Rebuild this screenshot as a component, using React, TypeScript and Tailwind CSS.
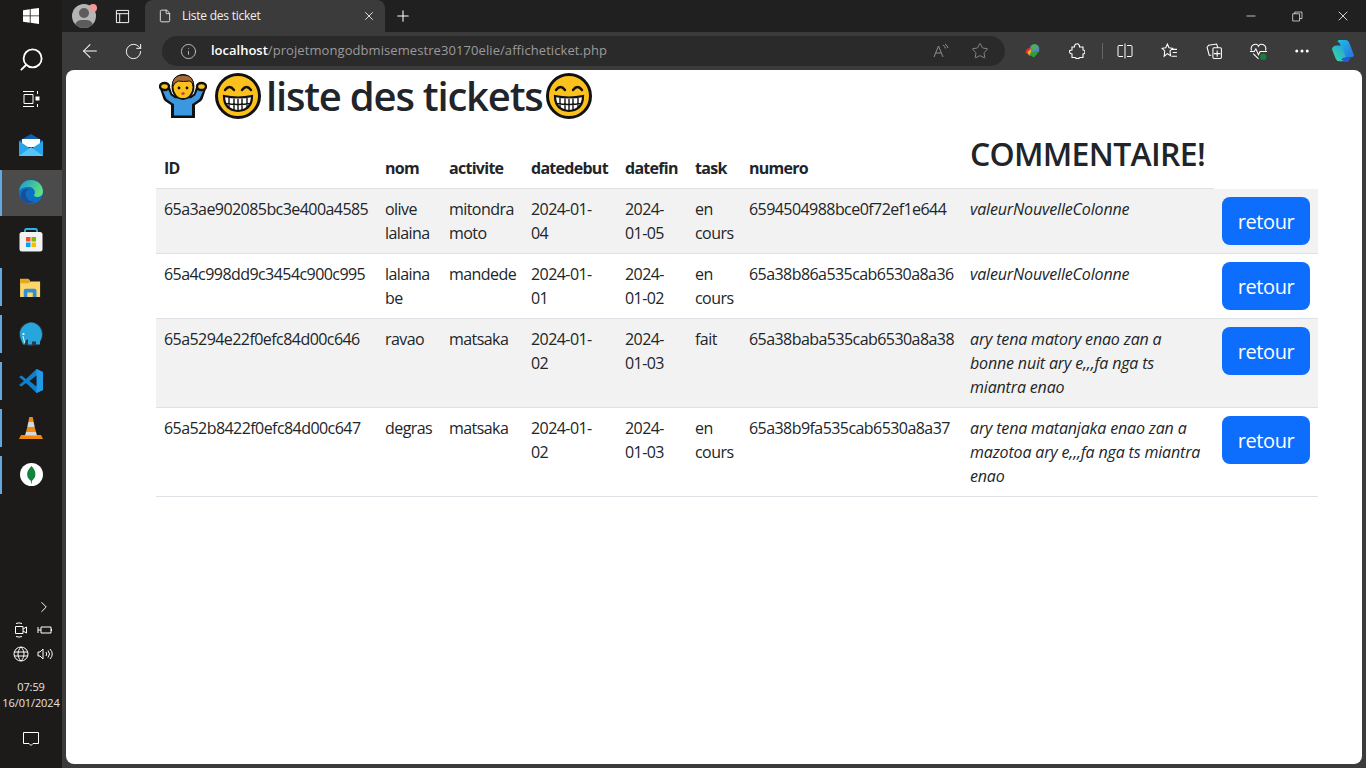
import React from 'react';
import { ArrowLeft, ChevronRight, Ellipsis, File, Info, Minus, Plus, RotateCw, Search, Star, X } from 'lucide-react';

type Ticket = {
  id: string;
  nom: string;
  activite: string;
  debut: string;
  fin: string;
  task: string;
  numero: string;
  commentaire: string;
};

const tickets: Ticket[] = [
  { id: '65a3ae902085bc3e400a4585', nom: 'olive lalaina', activite: 'mitondra moto', debut: '2024-01-04', fin: '2024-01-05', task: 'en cours', numero: '6594504988bce0f72ef1e644', commentaire: 'valeurNouvelleColonne' },
  { id: '65a4c998dd9c3454c900c995', nom: 'lalaina be', activite: 'mandede', debut: '2024-01-01', fin: '2024-01-02', task: 'en cours', numero: '65a38b86a535cab6530a8a36', commentaire: 'valeurNouvelleColonne' },
  { id: '65a5294e22f0efc84d00c646', nom: 'ravao', activite: 'matsaka', debut: '2024-01-02', fin: '2024-01-03', task: 'fait', numero: '65a38baba535cab6530a8a38', commentaire: 'ary tena matory enao zan a bonne nuit ary e,,,fa nga ts miantra enao' },
  { id: '65a52b8422f0efc84d00c647', nom: 'degras', activite: 'matsaka', debut: '2024-01-02', fin: '2024-01-03', task: 'en cours', numero: '65a38b9fa535cab6530a8a37', commentaire: 'ary tena matanjaka enao zan a mazotoa ary e,,,fa nga ts miantra enao' },
];

const GrinEmoji = () => (
  <svg viewBox="0 0 48 48" className="w-12 h-12 shrink-0">
    <circle cx="24" cy="24" r="21.5" fill="#fcc21b" stroke="#111" strokeWidth="3" />
    <path d="M11 18q4.500-6 9 0M28 18q4.500-6 9 0" fill="none" stroke="#111" strokeWidth="2.4" strokeLinecap="round" />
    <path d="M10 24q14 3 28 0 0 14-14 15Q10 38 10 24z" fill="#fff" stroke="#111" strokeWidth="2.2" />
    <path d="M15 26v10M20 26.500v11.500M24 27v12M28 26.500v11.500M33 26v10M11 31.500q13 2 26 0" fill="none" stroke="#111" strokeWidth="1.400" />
  </svg>
);

const ShrugEmoji = () => (
  <svg viewBox="0 0 48 48" className="w-12 h-12 shrink-0">
    <path d="M6 16 9 25 15 29H33L39 25 42 16" fill="none" stroke="#111" strokeWidth="10" strokeLinejoin="round" />
    <rect x="12" y="26" width="24" height="20" fill="#111" />
    <path d="M6 17 9.500 25 15 29H33L38.500 25 42 17" fill="none" stroke="#3b97e0" strokeWidth="5.500" strokeLinejoin="round" />
    <rect x="15" y="27" width="18" height="16.500" fill="#3b97e0" />
    <ellipse cx="5.500" cy="14.500" rx="4.500" ry="3.500" fill="#fcc21b" stroke="#111" strokeWidth="2.400" />
    <ellipse cx="42.500" cy="14.500" rx="4.500" ry="3.500" fill="#fcc21b" stroke="#111" strokeWidth="2.400" />
    <ellipse cx="24" cy="15" rx="10.500" ry="12" fill="#fcc21b" stroke="#111" strokeWidth="1.800" />
    <path d="M13.500 15Q12.500 3 24 3t10.500 12q-1-6-4-6-6 1-11 0-4 1-6 6z" fill="#a56a37" stroke="#111" strokeWidth="1" />
    <circle cx="20" cy="16" r="1.400" fill="#111" />
    <circle cx="28" cy="16" r="1.400" fill="#111" />
    <ellipse cx="24" cy="21.500" rx="1.700" ry="1.500" fill="#c9472e" />
  </svg>
);

const WindowsLogo = () => (
  <svg viewBox="0 0 16 16" className="w-4 h-4" fill="#fff">
    <path d="M0 2.300 6.800 1.200V7.500H0zM7.600 1.100 16 0V7.500H7.600zM0 8.300H6.800V14.700L0 13.700zM7.600 8.300H16V16L7.600 14.800z" />
  </svg>
);

const TaskView = () => (
  <svg viewBox="0 0 18 18" className="w-[18px] h-[18px]" fill="none" stroke="#fff" strokeWidth="1">
    <path d="M1 1.500h11M1 16.500h11M2 4.500h9v9H2zM15.500 1v3M15.500 14v3" />
    <rect x="14" y="7" width="3" height="3" fill="#fff" />
  </svg>
);

const MailLogo = () => (
  <svg viewBox="0 0 24 24" className="w-6 h-6">
    <path d="M0 7 12 0l12 7v3H0z" fill="#0f5fb0" />
    <path d="M3 5h18v8H3z" fill="#fff" />
    <path d="M0 7l12 8 12-8v15H0z" fill="#27a5ea" />
    <path d="M0 22 12 13l12 9z" fill="#58c5f5" />
  </svg>
);

const EdgeLogo = ({ size = 'w-6 h-6' }: { size?: string }) => (
  <svg viewBox="0 0 24 24" className={size}>
    <defs>
      <linearGradient id="edgeTop" x1="0" y1="0" x2="1" y2="0.500">
        <stop offset="0" stopColor="#1597d8" />
        <stop offset="1" stopColor="#5fe07c" />
      </linearGradient>
    </defs>
    <circle cx="12" cy="12" r="12" fill="#0c6fc4" />
    <path d="M0 11C1 3 7 0 12 0c7 0 12 5 12 12 0 3-3 5-6 5-2 0-3-1-3-2 2-2 1-7-4-8-5-.5-9 1-11 4z" fill="url(#edgeTop)" />
    <path d="M11 9c-3 0-5 3-4 7 1 3 4 6 9 6-4 2-11 2-14-4-1-7 4-10 9-9z" fill="#1a4f96" />
  </svg>
);

const StoreLogo = () => (
  <svg viewBox="0 0 24 24" className="w-6 h-6">
    <path d="M6 5V2.500Q6 1 7.500 1h9Q18 1 18 2.500V5" fill="none" stroke="#28b5ec" strokeWidth="1.800" />
    <rect x="0.500" y="4" width="23" height="19.500" rx="2.500" fill="#f2f2f2" />
    <rect x="7" y="9" width="4.500" height="4.500" fill="#f25022" />
    <rect x="12.500" y="9" width="4.500" height="4.500" fill="#7fba00" />
    <rect x="7" y="14.500" width="4.500" height="4.500" fill="#00a4ef" />
    <rect x="12.500" y="14.500" width="4.500" height="4.500" fill="#ffb900" />
  </svg>
);

const FolderLogo = () => (
  <svg viewBox="0 0 24 22" className="w-[22px] h-5">
    <path d="M0 2h9l2 2h-11z" fill="#d9a21b" />
    <path d="M0 3h10l1 2h11v17H0z" fill="#fcd669" />
    <path d="M0 3h10l1 2-1 2H0z" fill="#e5a91f" />
    <path d="M4 22v-7q0-2 2-2h10q2 0 2 2v7h-4v-5H8v5z" fill="#2f8fd8" />
  </svg>
);

const ElephantLogo = () => (
  <svg viewBox="0 0 24 24" className="w-6 h-6">
    <circle cx="12" cy="12" r="12" fill="#2b3a44" />
    <path d="M1 12C1 6 6 1 12 .500c6 .500 11 5 11 12 0 3-1 5-2 7v3h-4v-3h-4v3H9v-5c-2 0-3 1-3 5H4c-1-3-3-6-3-10.500z" fill="#27a6dc" />
    <circle cx="4.500" cy="12" r="1.100" fill="#fff" />
    <path d="M4 14q1 4 1.500 7" stroke="#e8f4fa" strokeWidth="1" fill="none" />
  </svg>
);

const VsCodeLogo = () => (
  <svg viewBox="0 0 24 24" className="w-6 h-6">
    <path d="M17.500 0 24 3v18l-6.500 3L7 14l-4.500 3.500L0 16l5-4-5-4 2.500-1.500L7 10z" fill="#0f7fce" />
    <path d="M17.500 0 24 3v18l-6.500 3z" fill="#1e9ae8" />
    <path d="M17.500 6.500 10.500 12l7 5.500z" fill="#1c1b1a" />
  </svg>
);

const VlcLogo = () => (
  <svg viewBox="0 0 24 24" className="w-6 h-6">
    <path d="M2 19h20l2 4H0z" fill="#f08a0c" />
    <path d="M10.300 1h3.400l1 5H9.300z" fill="#f28b0d" />
    <path d="M9.300 6h5.400l1 5H8.300z" fill="#d8d8d8" />
    <path d="M8.300 11h7.400l1.300 5H7z" fill="#f28b0d" />
    <path d="M7 16h10l1 3.500H6z" fill="#d8d8d8" />
  </svg>
);

const MongoLogo = () => (
  <svg viewBox="0 0 24 24" className="w-[23px] h-[23px]">
    <circle cx="12" cy="12" r="12" fill="#fff" />
    <path d="M12 3c3 3 4.500 6 4 10-.5 3-2.500 4.500-3.500 5.500l-.3 3h-.6l-.3-3C10 17.500 8 16 7.500 13c-.5-4 1.500-7 4.500-10z" fill="#13823f" />
  </svg>
);

const CopilotLogo = () => (
  <svg viewBox="0 0 26 26" className="w-6 h-6">
    <defs>
      <linearGradient id="copA" x1="0" y1="0" x2="1" y2="1">
        <stop offset="0" stopColor="#19c3e6" />
        <stop offset="1" stopColor="#2b6fe0" />
      </linearGradient>
      <linearGradient id="copB" x1="0" y1="1" x2="1" y2="0">
        <stop offset="0" stopColor="#3fd8a0" />
        <stop offset="1" stopColor="#1c9de0" />
      </linearGradient>
    </defs>
    <path d="M8 1h8q3 0 4 4l5 13q-1 2-4 2h-6L10 6Q9 3 7 3z" fill="url(#copA)" />
    <path d="M6 7h6l4 13q1 3 3 4H9q-3 0-4-3L1 11Q2 7 6 7z" fill="url(#copB)" />
    <path d="M11 22q3 3 6 3h1q2-1 3-5h-7z" fill="#2557d6" />
  </svg>
);

const IdmLogo = () => (
  <svg viewBox="0 0 16 14" className="w-4 h-[14px]">
    <circle cx="9.500" cy="5" r="4.800" fill="#5f86c4" />
    <path d="M7 1q4-2 6 1l-2 3H7z" fill="#4caf50" />
    <path d="M.5 9a5 5 0 0 1 4-5l2 1-3 3 1 3z" fill="#d8342c" />
    <path d="M2.500 8 6 5v3l2 1-2 2-2 .5z" fill="#f3b21c" />
    <path d="M6 8 15 6.500 9 13.500 4.500 11z" fill="#2e9e3a" />
  </svg>
);

const Stroke = ({ d, className = 'w-4 h-4', color = '#fff' }: { d: string; className?: string; color?: string }) => (
  <svg viewBox="0 0 16 16" className={className} fill="none" stroke={color} strokeWidth="1">
    <path d={d} />
  </svg>
);

const Taskbar = () => {
  const apps = [
    { icon: <MailLogo />, bar: false, active: false },
    { icon: <EdgeLogo />, bar: true, active: true },
    { icon: <StoreLogo />, bar: false, active: false },
    { icon: <FolderLogo />, bar: true, active: false },
    { icon: <ElephantLogo />, bar: true, active: false },
    { icon: <VsCodeLogo />, bar: true, active: false },
    { icon: <VlcLogo />, bar: true, active: false },
    { icon: <MongoLogo />, bar: true, active: false },
  ];

  return (
    <aside className="w-[62px] shrink-0 h-full bg-[#1c1b1a] flex flex-col items-stretch text-white">
      <div className="h-8 flex items-center justify-center"><WindowsLogo /></div>
      <div className="h-[54px] flex items-center justify-center">
        <Search className="w-[27px] h-[27px] -scale-x-100" strokeWidth={1.6} />
      </div>
      <div className="h-[26px] flex items-center justify-center"><TaskView /></div>
      <div className="mt-[11px] flex flex-col">
        {apps.map((app, i) => (
          <div key={i} className={`flex items-center justify-center relative pb-[2px] ${app.active ? 'bg-[#4b4b4b] h-[46px] mb-px' : 'h-[47px]'}`}>
            {app.bar && <span className={`absolute left-0 w-[2px] bg-[#63a9e0] ${app.active ? 'top-0 bottom-0' : 'top-[4px] bottom-[5px]'}`} />}
            {app.icon}
          </div>
        ))}
      </div>

      <div className="mt-auto flex flex-col pb-[21px]">
        <div className="flex justify-end pr-[9px]"><ChevronRight className="w-[18px] h-[18px]" strokeWidth={1.3} /></div>
        <div className="flex justify-center gap-2 mt-[6px] pl-[4px]">
          <Stroke d="M2.500 4.500h7.500v7H2.500zM10 7l3.500-2v6L10 9M3 1.500q3-1.200 6 0M3 14.500q3 1.200 6 0" />
          <Stroke d="M1 5v6M1 8h3M4 5h10v6H4zM14.500 7v2" />
        </div>
        <div className="flex justify-center gap-2 mt-2 pl-[4px]">
          <Stroke className="w-4 h-4" d="M8 1a7 7 0 1 0 0 14A7 7 0 0 0 8 1zM1 6h14M1 10h14M8 1c-4 4-4 10 0 14M8 1c4 4 4 10 0 14" />
          <Stroke className="w-4 h-4" d="M1 6v4h2l3 3V3L3 6zM9 6q1.500 2 0 4M11 4.500q3 3.500 0 7M13 3q4.500 5 0 10" />
        </div>
        <div className="mt-[17px] text-center text-[11px] leading-4 text-[#e4e4e4] font-['Open_Sans',sans-serif] tracking-[-0.01em] whitespace-nowrap">
          <div>07:59</div>
          <div>16/01/2024</div>
        </div>
        <div className="flex justify-center mt-[20px]">
          <Stroke className="w-4 h-4" d="M.5 1.500h15v11H10l-2 2-2-2H.5z" />
        </div>
      </div>
    </aside>
  );
};

const TabStrip = () => (
  <div className="h-8 flex items-stretch bg-[#202020] text-white shrink-0">
    <div className="w-[83px] flex items-center pl-[10px]">
      <div className="relative w-[24px] h-[24px]">
        <div className="w-full h-full rounded-full bg-[#b5b5b5] overflow-hidden relative">
          <span className="absolute left-[7px] top-[4px] w-[10px] h-[10px] rounded-full bg-[#5c5c5c]" />
          <span className="absolute left-[3px] top-[16px] w-[18px] h-3 rounded-full bg-[#5c5c5c]" />
        </div>
        <span className="absolute -right-[1px] top-0 w-2 h-2 rounded-full bg-[#f19a9a]" />
      </div>
      <Stroke className="w-[15px] h-[15px] ml-[19px]" d="M1.500 1.500h13v13h-13zM1.500 5h13M5 5v9.500" />
    </div>
    <div className="w-[240px] bg-[#3b3b3b] rounded-t-lg flex items-center pl-[13px] pr-[9px]">
      <File className="w-[14px] h-[14px]" strokeWidth={1.4} />
      <span className="ml-[10px] text-xs text-[#f0f0f0] flex-1 font-['Open_Sans',sans-serif] tracking-[-0.02em]">Liste des ticket</span>
      <X className="w-[14px] h-[14px]" strokeWidth={1.4} />
    </div>
    <div className="flex items-center ml-[9px]"><Plus className="w-[18px] h-[18px]" strokeWidth={1.4} /></div>
    <div className="ml-auto flex items-center pr-[15px]">
      <Minus className="w-[14px] h-[14px]" strokeWidth={1.2} />
      <Stroke className="w-[11px] h-[11px] ml-[34px]" d="M1 4h10v10.500H1zM4 4V1.500h10.500V11H11" />
      <X className="w-[16px] h-[16px] ml-[32px]" strokeWidth={1.2} />
    </div>
  </div>
);

const ToolbarSlot = ({ width, children }: { width: string; children: React.ReactNode }) => (
  <div className={`${width} flex justify-center items-center`}>{children}</div>
);

const Toolbar = () => (
  <div className="h-[38px] flex items-center bg-[#3b3b3b] text-white shrink-0 pl-[17px]">
    <ArrowLeft className="w-[22px] h-[22px]" strokeWidth={1.1} />
    <RotateCw className="w-[19px] h-[19px] ml-[23px]" strokeWidth={1.2} />
    <div className="ml-[19px] w-[843px] h-[30px] rounded-full bg-[#2a2a2a] flex items-center pl-[18px] pr-[16px] font-['Open_Sans',sans-serif] text-[13px]">
      <Info className="w-[17px] h-[17px] text-[#cfcfcf]" strokeWidth={1.2} />
      <span className="ml-[14px] font-semibold">localhost</span>
      <span className="text-[#9a9a9a] tracking-[0.006em]">/projetmongodbmisemestre30170elie/afficheticket.php</span>
      <div className="ml-auto flex items-center gap-[22px] text-[#8e8e8e]">
        <Stroke className="w-4 h-4" color="#8e8e8e" d="M1 14 5.500 3l4.500 11M2.800 10h5.400M10 2q2 1 2.500 3.500M12 1q2.500 1.500 3 4" />
        <Star className="w-[18px] h-[18px]" strokeWidth={1.2} />
      </div>
    </div>
    <div className="ml-[6px] flex items-center">
      <ToolbarSlot width="w-[44px]"><IdmLogo /></ToolbarSlot>
      <ToolbarSlot width="w-[44px]">
        <svg viewBox="0 0 16 16" className="w-4 h-4" fill="none" stroke="#fff" strokeWidth="1.100">
          <path d="M5.500 2.800q.5-2 2.500-2t2.500 2V4h3.500v3q2 0 2 2t-2 2v3.500h-3q-1 1-2.500 1T6 14.500H3V11q-2 0-2.500-2T3 7V4h2.500z" />
        </svg>
      </ToolbarSlot>
      <span className="w-px h-4 bg-[#666] ml-[3px]" />
      <ToolbarSlot width="w-[44px]">
        <Stroke className="w-4 h-4" d="M8 .5v15M6 2.500H2Q1 2.500 1 3.500v9q0 1 1 1h4M10 2.500h4q1 0 1 1v9q0 1-1 1h-4" />
      </ToolbarSlot>
      <ToolbarSlot width="w-[45px]">
        <Stroke className="w-[17px] h-[17px]" d="M6 1l1.500 3.500 3.500.5-2.500 2.500.5 4.500-3-2-3 2.500.5-5L1 5l3.500-.5zM11 6h4M11 9h4M10 12.500h5" />
      </ToolbarSlot>
      <ToolbarSlot width="w-[45px]">
        <Stroke className="w-[17px] h-[17px]" d="M11 4 10 1 2.500 2 1 4l2 7.500H5M6.500 5.500q0-1 1-1h6q1 0 1 1v8q0 1-1 1h-6q-1 0-1-1zM10.500 7v6M7.500 10h6" />
      </ToolbarSlot>
      <ToolbarSlot width="w-[43px]">
        <svg viewBox="0 0 16 16" className="w-[17px] h-[17px]" fill="none" stroke="#fff" strokeWidth="1">
          <path d="M1.500 7C-.5 2 6 -1 8 3c2-4 8.500-1 6.500 4M0 8h4l1.500-2.500L8 11l1.500-3H16M3 10l5 5" />
          <circle cx="12.500" cy="13" r="3" fill="#16803a" stroke="none" />
        </svg>
      </ToolbarSlot>
      <ToolbarSlot width="w-[43px]"><Ellipsis className="w-[18px] h-[18px]" strokeWidth={2} /></ToolbarSlot>
      <ToolbarSlot width="w-[40px]"><CopilotLogo /></ToolbarSlot>
    </div>
  </div>
);

const App: React.FC = () => {
  return (
    <div className="w-[1366px] h-[768px] flex bg-[#3b3b3b] overflow-hidden">
      <Taskbar />
      <div className="flex-1 flex flex-col min-w-0">
        <TabStrip />
        <Toolbar />
        <main className="flex-1 ml-1 mr-1 mb-1 bg-white rounded-lg pl-[90px] pr-[44px] text-[#212529] font-['Open_Sans',sans-serif]">
          <h1 className="flex items-center h-[48px] mt-[2px] mb-[6px] pl-[3px] text-[40px] leading-[48px] font-semibold tracking-[-0.03em]">
            <ShrugEmoji />
            <span className="ml-[7px]"><GrinEmoji /></span>
            <span className="pl-[4px] pr-[2px]">liste des tickets</span>
            <GrinEmoji />
          </h1>
          <table className="w-[1162px] table-fixed border-collapse text-base leading-6 tracking-[-0.035em]">
            <colgroup>
              <col className="w-[221px]" />
              <col className="w-[64px]" />
              <col className="w-[82px]" />
              <col className="w-[94px]" />
              <col className="w-[70px]" />
              <col className="w-[54px]" />
              <col className="w-[221px]" />
              <col className="w-[252px]" />
              <col className="w-[104px]" />
            </colgroup>
            <thead>
              <tr className="h-[60px] tracking-[-0.045em]">
                {['ID', 'nom', 'activite', 'datedebut', 'datefin', 'task', 'numero'].map((h) => (
                  <th key={h} className="p-2 text-left align-bottom font-bold border-b border-[#dee2e6]">{h}</th>
                ))}
                <th className="p-2 text-left align-bottom border-b border-[#dee2e6]">
                  <h2 className="text-[32px] leading-[40px] font-semibold mb-[6px] tracking-[-0.022em] whitespace-nowrap">COMMENTAIRE!</h2>
                </th>
              </tr>
            </thead>
            <tbody>
              {tickets.map((t, i) => (
                <tr key={t.id} className={`border-b border-[#dee2e6] ${i % 2 === 0 ? 'bg-[#f2f2f2]' : ''}`}>
                  <td className="p-2 align-top">{t.id}</td>
                  <td className="p-2 align-top">{t.nom}</td>
                  <td className="p-2 align-top">{t.activite}</td>
                  <td className="p-2 align-top"><div className="w-[70px]">{t.debut}</div></td>
                  <td className="p-2 align-top">{t.fin}</td>
                  <td className="p-2 align-top">{t.task}</td>
                  <td className="p-2 align-top">{t.numero}</td>
                  <td className="p-2 align-top italic tracking-[-0.01em]">{t.commentaire}</td>
                  <td className="p-2 align-top">
                    <button className="w-[88px] h-12 pt-[2px] rounded-lg bg-[#0d6efd] text-white text-xl tracking-[-0.02em]">retour</button>
                  </td>
                </tr>
              ))}
            </tbody>
          </table>
        </main>
      </div>
    </div>
  );
};

export default App;
